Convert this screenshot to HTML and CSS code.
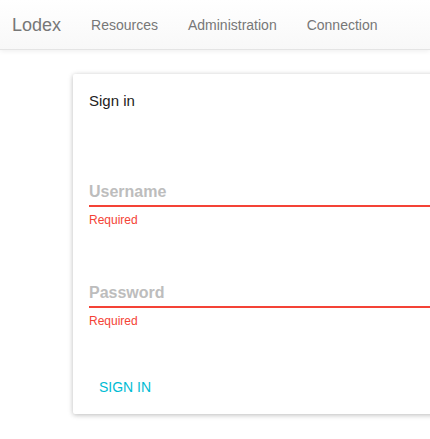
FILE: index.html
```html
<!DOCTYPE html>
<html>
<head>
<meta charset="utf-8">
<title>Lodex</title>
<link rel="stylesheet" href="styles.css">
</head>
<body>
<nav class="navbar">
  <span class="brand">Lodex</span>
  <a class="nav-link">Resources</a>
  <a class="nav-link">Administration</a>
  <a class="nav-link">Connection</a>
</nav>
<main class="page">
  <section class="card">
    <h2 class="card-title">Sign in</h2>
    <div class="field">
      <div class="field-label">Username</div>
      <div class="field-line"></div>
      <div class="field-error">Required</div>
    </div>
    <div class="field field-next">
      <div class="field-label">Password</div>
      <div class="field-line"></div>
      <div class="field-error">Required</div>
    </div>
    <div class="actions">
      <button class="flat-btn">SIGN IN</button>
    </div>
  </section>
</main>
</body>
</html>
```

FILE: styles.css
```css
html {
  overflow: hidden;
}

body {
  margin: 0;
  padding: 0;
  background: #fff;
  font-family: "Liberation Sans", Arial, sans-serif;
}

.navbar {
  display: flex;
  align-items: center;
  height: 49px;
  border-bottom: 1px solid #e4e4e4;
  background: linear-gradient(to bottom, #ffffff 0%, #f8f8f8 100%);
  box-shadow: 0 1px 5px rgba(0, 0, 0, 0.075);
  box-sizing: content-box;
}

.brand {
  font-size: 18px;
  line-height: 20px;
  color: #777;
  padding: 0 15px 0 12px;
}

.nav-link {
  font-size: 14px;
  line-height: 20px;
  color: #777;
  padding: 0 15px;
  text-decoration: none;
}

.page {
  padding: 24px 0 26px 73px;
}

.card {
  width: 420px;
  background: #fff;
  border-radius: 2px;
  box-shadow: 0 1px 6px rgba(0, 0, 0, 0.12), 0 1px 4px rgba(0, 0, 0, 0.16);
  padding: 15px 0 6px 16px;
  box-sizing: border-box;
  height: 340px;
}

.card-title {
  margin: 0 0 14px;
  font-size: 15px;
  line-height: 24px;
  font-weight: normal;
  color: #222;
}

.field {
  padding-top: 55px;
}

.field-next {
  padding-top: 56px;
}

.field-label {
  font-size: 16px;
  line-height: 20px;
  font-weight: bold;
  color: #bdbdbd;
}

.field-line {
  margin-top: 3px;
  height: 2px;
  background: #f44336;
}

.field-error {
  margin-top: 6px;
  font-size: 12px;
  line-height: 14px;
  color: #f44336;
}

.actions {
  margin-top: 41px;
}

.flat-btn {
  display: block;
  border: none;
  background: transparent;
  padding: 0 10px;
  height: 36px;
  font-family: "Liberation Sans", Arial, sans-serif;
  font-size: 14px;
  line-height: 36px;
  color: #00bcd4;
  cursor: pointer;
}
```
